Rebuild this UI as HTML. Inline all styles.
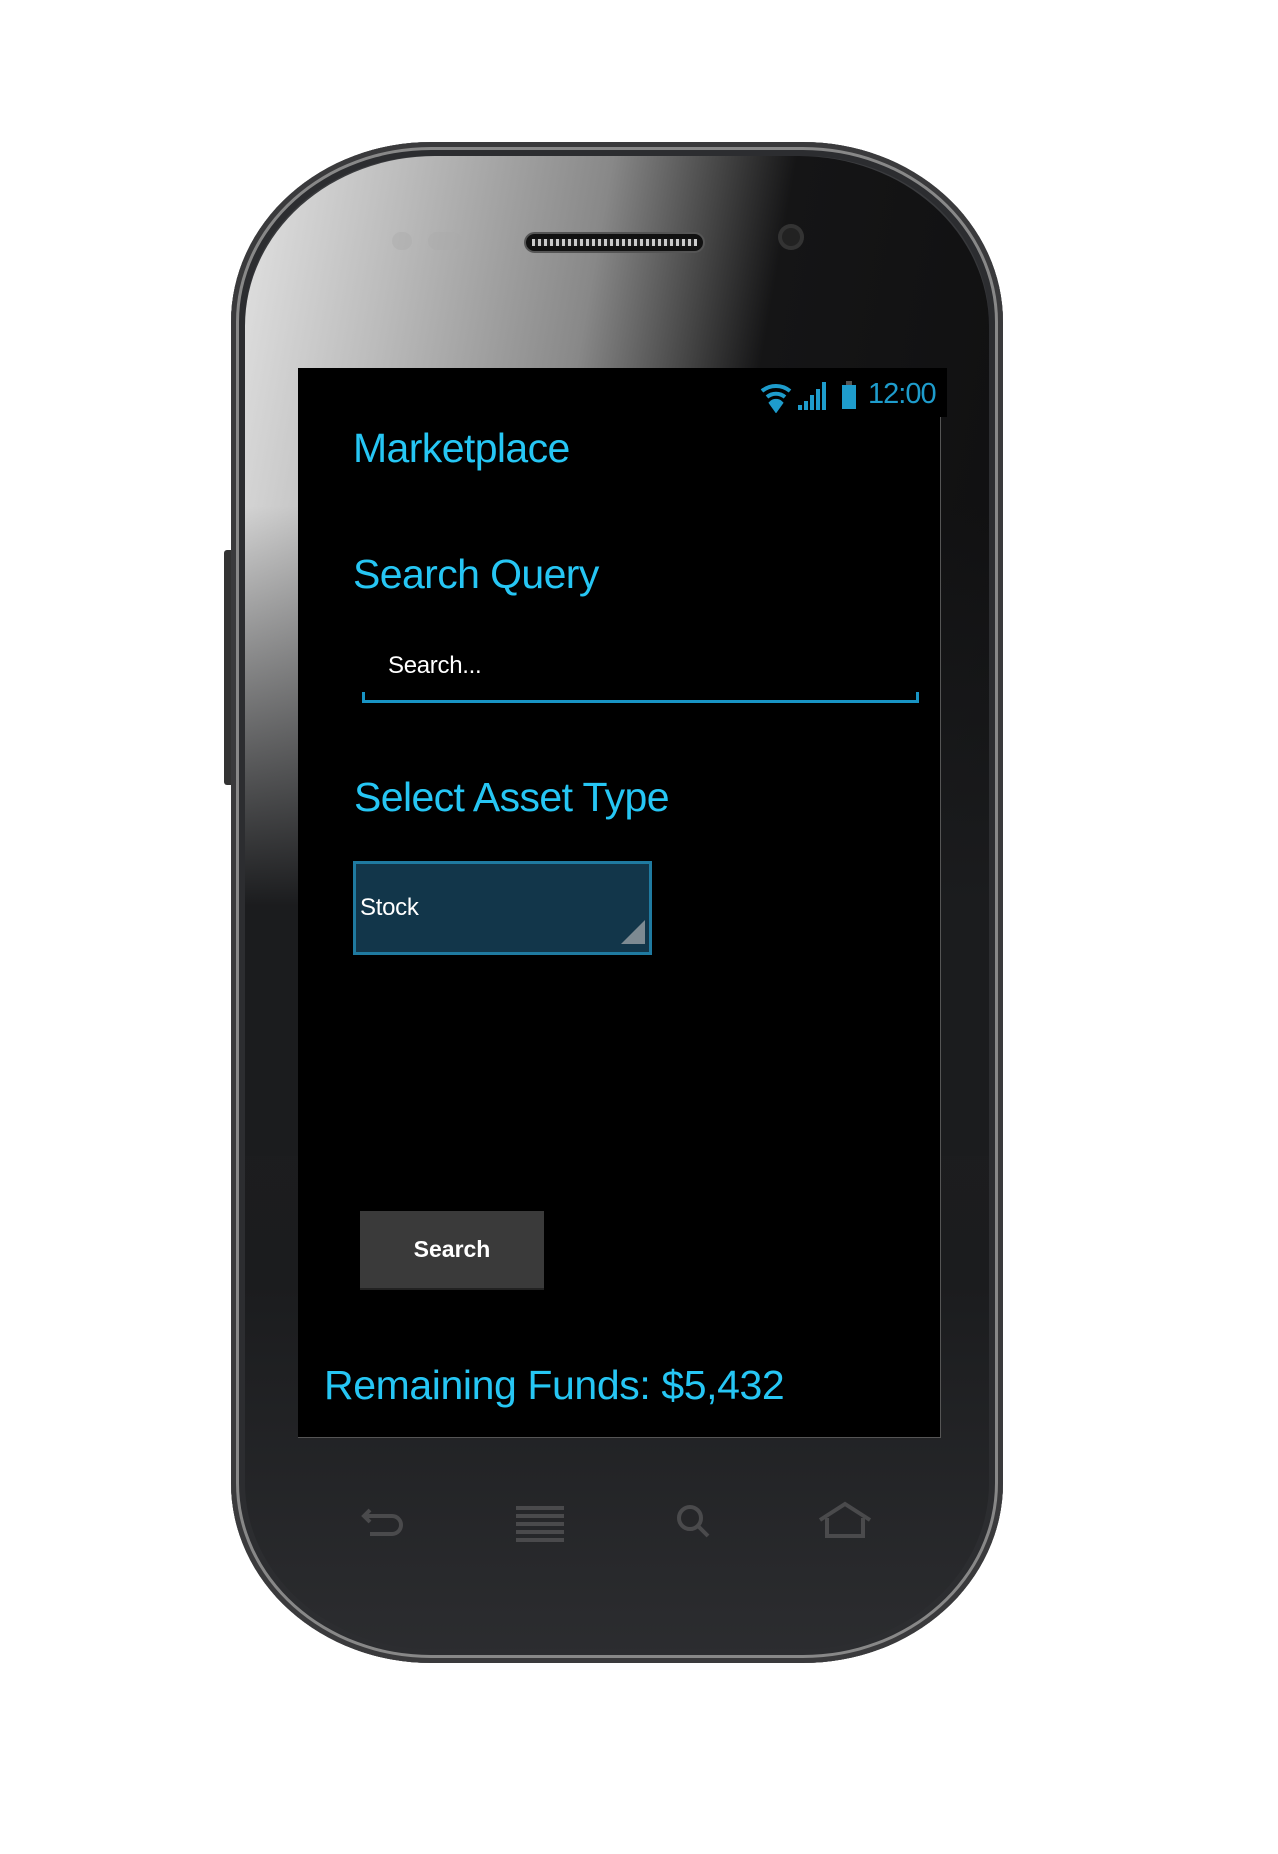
<!DOCTYPE html>
<html><head><style>
body{margin:0;width:1278px;height:1854px;background:#fff;position:relative;overflow:hidden;font-family:"Liberation Sans",sans-serif}
.abs{position:absolute}
.phone{left:231px;top:142px;width:772px;height:1521px;border-radius:200px 200px 200px 200px/180px 180px 180px 180px;background:linear-gradient(180deg,#3c3d40 0%,#1e1f21 40%,#1b1c1e 75%,#2c2d30 100%);box-shadow:inset 0 0 0 5px #3a3a3c,inset 0 0 0 8px #888,inset 0 0 0 14px #2c2d30}
.glare{left:245px;top:156px;width:744px;height:1000px;border-radius:190px 190px 0 0/170px 170px 0 0;background:linear-gradient(to bottom,rgba(27,28,30,0) 0%,rgba(27,28,30,0) 35%,#1b1c1e 75%),linear-gradient(100deg,#e2e2e2 0%,#bbb 18%,#888 40%,#444 52%,#151516 60%,#0f0f10 100%)}
.blue{color:#26c6f4}
</style></head><body>
<div class="abs" style="left:224px;top:550px;width:10px;height:235px;background:#333;border-radius:3px"></div>
<div class="abs phone"></div>
<div class="abs glare"></div>
<div class="abs" style="left:524px;top:232px;width:181px;height:21px;border-radius:11px;background:#111;border:2px solid #555;box-sizing:border-box"></div>
<div class="abs" style="left:532px;top:239px;width:165px;height:7px;background:repeating-linear-gradient(90deg,#ccc 0 3px,#222 3px 6px)"></div>
<div class="abs" style="left:778px;top:224px;width:26px;height:26px;border-radius:50%;background:#222;box-shadow:inset 0 0 0 4px #333"></div>
<div class="abs" style="left:392px;top:232px;width:20px;height:18px;border-radius:9px;background:#aaa;opacity:.4"></div>
<div class="abs" style="left:428px;top:232px;width:34px;height:18px;border-radius:9px;background:#aaa;opacity:.4"></div>
<div class="abs" style="left:298px;top:368px;width:642px;height:1069px;background:#000;border-right:1px solid #555;border-bottom:1px solid #555"></div>
<div class="abs" style="left:930px;top:368px;width:17px;height:49px;background:#000"></div>
<svg class="abs" style="left:758px;top:377px" width="72" height="36" viewBox="0 0 72 36" fill="none" stroke="#1e9ccc" stroke-width="4">
<path d="M4 14 A22 22 0 0 1 32 14"/><path d="M9 20 A14 14 0 0 1 27 20"/><path d="M18 33 L13 26 A7 7 0 0 1 23 26 Z" fill="#1e9ccc"/>
<path d="M42 33V28M48 33V24M54 33V18M60 33V12M66 33V5" stroke-width="4"/>
</svg>
<div class="abs" style="left:842px;top:385px;width:14px;height:24px;background:#1e9ccc"></div>
<div class="abs" style="left:846px;top:381px;width:6px;height:4px;background:#555"></div>
<div class="abs" style="left:868px;top:378px;font-size:29px;color:#1e9ccc;letter-spacing:-1px">12:00</div>
<div class="abs blue" style="left:353px;top:425px;font-size:41px;letter-spacing:-.6px">Marketplace</div>
<div class="abs blue" style="left:353px;top:551px;font-size:41px;letter-spacing:-.6px">Search Query</div>
<div class="abs" style="left:388px;top:652px;font-size:24px;color:#fff;letter-spacing:-.3px">Search...</div>
<div class="abs" style="left:362px;top:692px;width:557px;height:11px;border:3px solid #1894c4;border-top:none;box-sizing:border-box"></div>
<div class="abs blue" style="left:354px;top:774px;font-size:41px;letter-spacing:-.6px">Select Asset Type</div>
<div class="abs" style="left:353px;top:861px;width:299px;height:94px;background:#12364a;border:3px solid #1f7aa0;box-sizing:border-box"></div>
<div class="abs" style="left:360px;top:894px;font-size:24px;color:#fff;letter-spacing:-.3px">Stock</div>
<div class="abs" style="left:621px;top:920px;width:0;height:0;border-left:24px solid transparent;border-bottom:24px solid #7d8a92"></div>
<div class="abs" style="left:360px;top:1211px;width:184px;height:79px;background:#3a3a3a;border-bottom:2px solid #222;box-sizing:border-box;color:#fff;font-weight:bold;font-size:23px;text-align:center;line-height:77px">Search</div>
<div class="abs blue" style="left:324px;top:1362px;font-size:41px;letter-spacing:-.4px">Remaining Funds: $5,432</div>
<svg class="abs" style="left:360px;top:1500px" width="520" height="50" viewBox="0 0 520 50" fill="none" stroke="#4a4a4c" stroke-width="4">
<path d="M10 10 L4 16 L10 22 M4 16 H32 A9 9 0 0 1 32 34 H10"/>
<path d="M156 8H204M156 16H204M156 24H204M156 32H204M156 40H204"/>
<circle cx="330" cy="18" r="11"/><path d="M338 26 L348 36"/>
<path d="M460 20 L485 4 L510 20 M467 18 V36 H503 V18"/>
</svg>
</body></html>
